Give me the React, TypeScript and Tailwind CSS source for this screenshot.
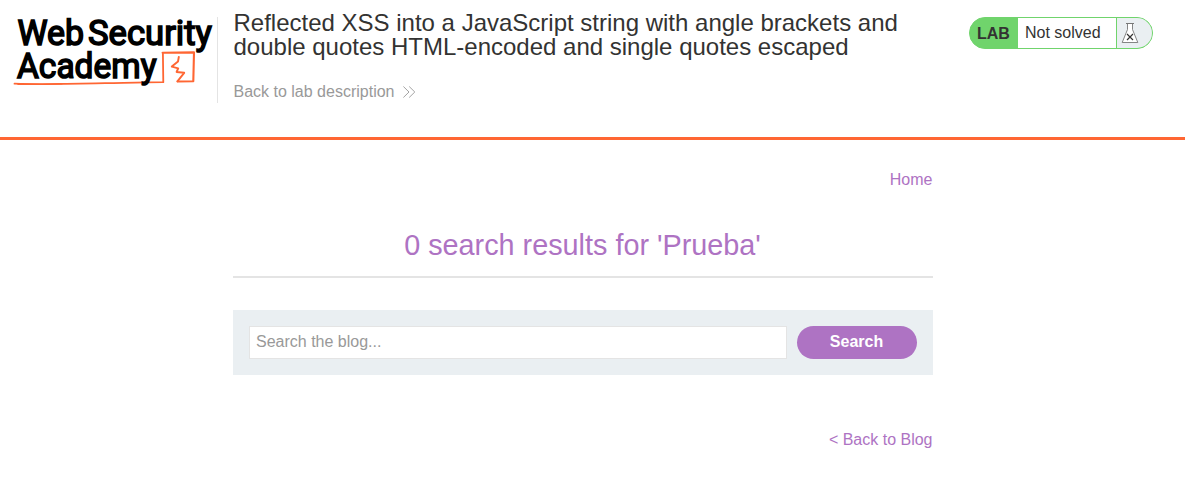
function Logo() {
  return (
    <svg
      className="block h-[90px] w-[217px] shrink-0 overflow-visible"
      viewBox="0 0 217 90"
      role="img"
      aria-label="Web Security Academy"
    >
      <g
        className="font-['Roboto',sans-serif] text-[35.5px] font-normal"
        fill="#000"
        stroke="#000"
        strokeWidth="1.6"
      >
        <text x="17.5" y="44.8" textLength="66.5" lengthAdjust="spacingAndGlyphs">Web</text>
        <text x="88" y="44.8" textLength="124" lengthAdjust="spacingAndGlyphs">Security</text>
      </g>
      <g fill="none" stroke="#ff6633" strokeLinejoin="round" strokeLinecap="round">
        <path d="M14.5 83.7 C45 84.6 75 83.8 105 83.2 S145 82.3 163.3 82.2 L162.9 53.2" strokeWidth="1.8" />
        <path d="M18 84.2 C35 84.8 45 84.2 62 83.8" strokeWidth="1.4" />
        <path d="M162.6 52.8 L194 52.4 L193.3 81.2 L177.6 81.5" strokeWidth="2.1" />
        <path d="M178.8 57 L178 61.5 L171.8 66.6 L178.2 68.3 L176.6 72 L184.2 72.8 L177.4 81.3" strokeWidth="1.9" />
      </g>
      <text
        className="font-['Roboto',sans-serif] text-[35.5px] font-normal"
        x="17"
        y="77.6"
        textLength="139.5"
        lengthAdjust="spacingAndGlyphs"
        stroke="#000"
        strokeWidth="1.6"
      >
        Academy
      </text>
    </svg>
  );
}

function Chevrons() {
  return (
    <svg className="ml-2 h-3 w-[14px]" viewBox="0 0 14 12" fill="none" stroke="#999" strokeWidth="0.9">
      <path d="M1.4 0.5 L7 6 L1.4 11.5 M7.2 0.5 L12.8 6 L7.2 11.5" />
    </svg>
  );
}

function Flask() {
  return (
    <svg className="h-[22px] w-[18px]" viewBox="0 0 18 22" fill="none">
      <path d="M6.5 1.5 V7.5 L1.2 20.5 H16.8 L11.5 7.5 V1.5 Z" fill="#fff" stroke="#777" strokeWidth="0.9" />
      <path d="M5 1.5 H13" stroke="#777" />
      <path d="M6 12 L12 18 M12 12 L6 18" stroke="#333" strokeWidth="1.2" />
    </svg>
  );
}

function LabStatus() {
  return (
    <div className="mt-[17px] flex h-8 w-[184px] overflow-hidden rounded-full border border-[#70d46c] bg-[#70d46c] text-[#333332]">
      <span className="w-12 pl-[7px] text-base leading-[31px] font-bold">LAB</span>
      <span className="flex-1 bg-white pl-[7px] text-base leading-[29px]">Not solved</span>
      <span className="flex w-9 items-center border-l border-[#70d46c] bg-[#eaeff2] pl-1">
        <Flask />
      </span>
    </div>
  );
}

export default function App() {
  return (
    <div className="min-h-[488px] bg-white font-['Liberation_Sans',Arial,sans-serif] text-[#333332]">
      <header className="flex h-[140px] items-start border-b-[3px] border-[#ff6633]">
        <Logo />
        <div className="mt-[17px] h-[86px] w-px bg-[#e4e4e4]" />
        <div className="w-[735px] pt-[11px] pl-[15.5px]">
          <h2 className="w-[690px] text-2xl leading-6">
            Reflected XSS into a JavaScript string with angle brackets and double quotes HTML-encoded and single quotes escaped
          </h2>
          <a className="mt-[21px] flex items-center text-base leading-6 text-[#999]" href="#">
            Back to lab description
            <Chevrons />
          </a>
        </div>
        <div className="ml-4">
          <LabStatus />
        </div>
      </header>
      <main className="ml-[232.5px] flex w-[700px] flex-col pt-[28px]">
        <a className="self-end text-base leading-6 text-[#ae73c3]" href="#">Home</a>
        <section className="mt-[28px] flex h-[58px] items-start justify-center border-b-2 border-[#e4e4e4]">
          <h1 className="pt-[9px] text-[28.8px] leading-8 text-[#ae73c3]">0 search results for 'Prueba'</h1>
        </section>
        <form className="mt-8 flex h-[65px] gap-[10px] bg-[#eaeff2] p-4">
          <input
            className="h-[33px] min-w-0 flex-1 border border-[#e4e4e4] bg-white pr-1.5 pb-px pl-[6.5px] text-base outline-none placeholder:text-[#999]"
            type="text"
            placeholder="Search the blog..."
          />
          <button className="h-[33px] w-[120px] rounded-full bg-[#ae73c3] pb-0.5 text-base font-bold text-white" type="button">
            Search
          </button>
        </form>
        <a className="mt-[53px] self-end text-base leading-6 text-[#ae73c3]" href="#">&lt; Back to Blog</a>
      </main>
    </div>
  );
}
